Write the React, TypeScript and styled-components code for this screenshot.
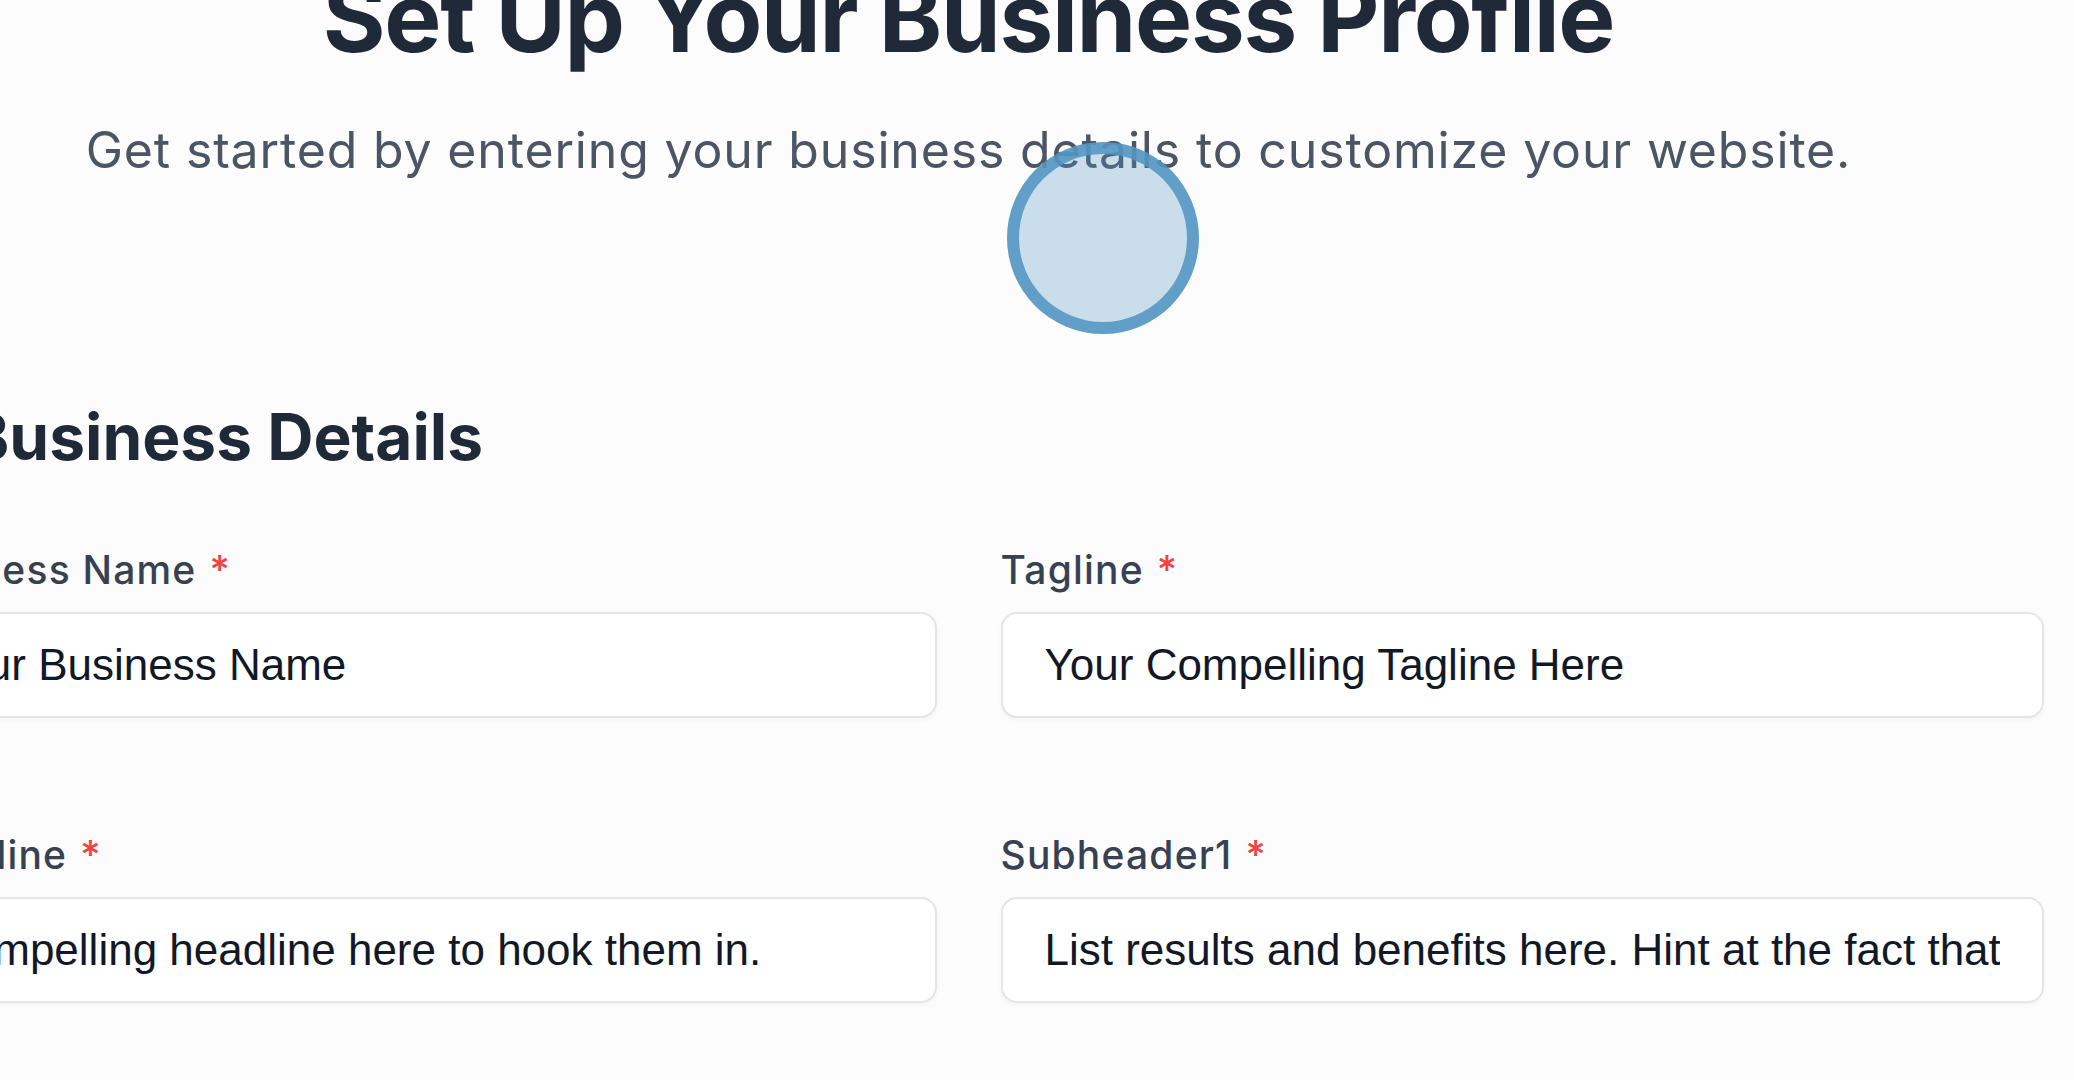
import React from "react";
import styled, { createGlobalStyle } from "styled-components";

const GlobalStyle = createGlobalStyle`
  html, body {
    margin: 0;
    padding: 0;
    background: #fcfcfc;
    overflow: hidden;
  }
  body {
    font-family: Inter, "Noto Sans", sans-serif;
    width: 2074px;
    height: 1080px;
  }
`;

const Viewport = styled.div`
  position: relative;
  width: 2074px;
  height: 1080px;
  overflow: hidden;
`;

const Page = styled.main`
  width: 2151px;
  margin-left: -107px;
  display: flex;
  flex-direction: column;
`;

const Header = styled.header`
  margin-top: -40px;
  display: flex;
  flex-direction: column;
  align-items: center;
  text-align: center;
`;

const Title = styled.h1`
  margin: 0;
  font-family: Inter, sans-serif;
  font-weight: 700;
  font-size: 96px;
  line-height: 1.2;
  color: #1f2937;
  letter-spacing: -1.3px;
`;

const Subtitle = styled.p`
  margin: 39px 0 0;
  font-family: Inter, sans-serif;
  font-weight: 400;
  font-size: 50px;
  line-height: 72px;
  letter-spacing: 0.84px;
  color: #4b5563;
`;

const Section = styled.section`
  margin-top: 208px;
  display: flex;
  flex-direction: column;
`;

const SectionTitle = styled.h2`
  margin: 0 0 64px;
  padding-left: 74px;
  font-family: Inter, sans-serif;
  font-weight: 700;
  font-size: 64px;
  line-height: 85px;
  color: #1f2937;
`;

const Grid = styled.div`
  display: grid;
  grid-template-columns: 1fr 1fr;
  column-gap: 64px;
  row-gap: 110px;
`;

const Field = styled.div`
  display: flex;
  flex-direction: column;
  gap: 16px;
`;

const Label = styled.label`
  font-family: Inter, sans-serif;
  font-weight: 500;
  font-size: 39px;
  line-height: 53px;
  letter-spacing: 1.2px;
  color: #374151;
  white-space: nowrap;
`;

const Required = styled.span`
  color: #ef4444;
  margin-left: 13px;
`;

const Input = styled.input`
  box-sizing: border-box;
  width: 100%;
  height: 106px;
  padding: 0 42px;
  border: 2px solid #e4e5e8;
  border-radius: 16px;
  background: #ffffff;
  box-shadow: 0 2px 4px rgba(0, 0, 0, 0.035);
  font-family: "Liberation Sans", Arial, sans-serif;
  font-size: 44px;
  color: #111827;
  outline: none;
`;

const Cursor = styled.div`
  position: absolute;
  left: 1007px;
  top: 142px;
  width: 192px;
  height: 192px;
  box-sizing: border-box;
  border-radius: 50%;
  border: 12px solid rgba(82, 150, 196, 0.88);
  background: rgba(82, 150, 196, 0.3);
  pointer-events: none;
`;

const fields = [
  { label: "Business Name", value: "Your Business Name" },
  { label: "Tagline", value: "Your Compelling Tagline Here" },
  { label: "Headline", value: "Compelling headline here to hook them in." },
  {
    label: "Subheader1",
    value:
      "List results and benefits here. Hint at the fact that your solution is the best choice.",
  },
];

export default function App() {
  return (
    <Viewport>
      <GlobalStyle />
      <Page>
        <Header>
          <Title>Set Up Your Business Profile</Title>
          <Subtitle>
            Get started by entering your business details to customize your website.
          </Subtitle>
        </Header>
        <Section>
          <SectionTitle>Business Details</SectionTitle>
          <Grid>
            {fields.map((f) => (
              <Field key={f.label}>
                <Label>
                  {f.label}
                  <Required>*</Required>
                </Label>
                <Input readOnly value={f.value} />
              </Field>
            ))}
          </Grid>
        </Section>
      </Page>
      <Cursor />
    </Viewport>
  );
}
